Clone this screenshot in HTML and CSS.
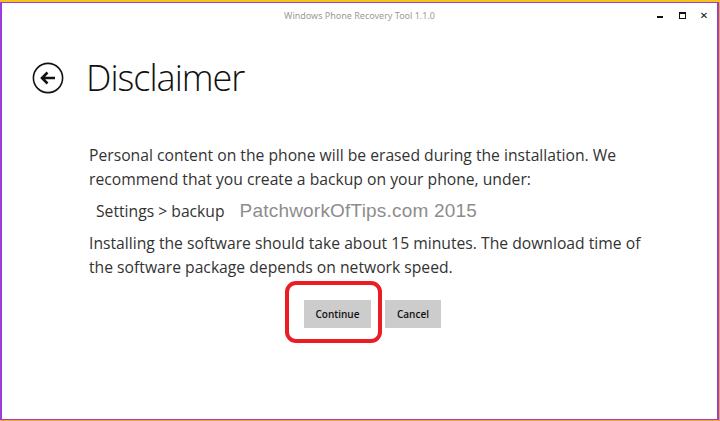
FILE: index.html
```html
<!DOCTYPE html>
<html lang="en">
<head>
  <meta charset="UTF-8">
  <title>Windows Phone Recovery Tool</title>
  <link rel="stylesheet" href="styles.css">
</head>
<body>
  <div class="taskstrip"></div>
  <div class="window">
    <div class="titlebar">
      <span class="title">Windows Phone Recovery Tool 1.1.0</span>
      <div class="winctrls">
        <span class="ctrl min"></span>
        <span class="ctrl max"></span>
        <span class="ctrl close">&#x2715;</span>
      </div>
    </div>

    <div class="header">
      <svg class="back" width="32" height="32" viewBox="0 0 32 32">
        <circle cx="16" cy="16" r="14.6" fill="none" stroke="#111" stroke-width="1.6"/>
        <path d="M23 16H10M15.5 10.5L10 16l5.5 5.5" fill="none" stroke="#111" stroke-width="2.6" stroke-linejoin="miter"/>
      </svg>
      <h1>Disclaimer</h1>
    </div>

    <div class="content">
      <p>Personal content on the phone will be erased during the installation. We recommend that you create a backup on your phone, under:</p>
      <div class="path">
        <span>Settings &gt; backup</span>
        <span class="watermark">PatchworkOfTips.com 2015</span>
      </div>
      <p>Installing the software should take about 15 minutes. The download time of the software package depends on network speed.</p>
    </div>

    <div class="actions">
      <button class="btn continue">Continue</button>
      <button class="btn cancel">Cancel</button>
    </div>
  </div>
</body>
</html>
```

FILE: styles.css
```css
html, body {
  margin: 0;
  padding: 0;
  height: 421px;
  overflow: hidden;
}
body {
  background: #f5a623;
  font-family: "Open Sans", "Noto Sans", sans-serif;
}
.taskstrip {
  height: 2px;
  background: #f7c21a;
}
.window {
  box-sizing: border-box;
  height: 418px;
  width: 719px;
  background: #fff;
  border: 1px solid #9a3ddb;
  border-left-width: 2px;
  border-right-width: 2px;
}
.titlebar {
  height: 24px;
  display: flex;
  align-items: center;
  justify-content: center;
  position: relative;
}
.title {
  font-family: "Noto Sans", sans-serif;
  font-size: 9px;
  color: #9a9a9a;
}
.winctrls {
  position: absolute;
  right: 0;
  top: 0;
  height: 24px;
  display: flex;
  align-items: center;
}
.ctrl {
  width: 22px;
  display: flex;
  justify-content: center;
  align-items: center;
  height: 12px;
}
.min::after {
  content: "";
  width: 6px;
  height: 2px;
  background: #111;
  margin-top: 4px;
}
.max::after {
  content: "";
  width: 5px;
  height: 4px;
  border: 1px solid #111;
  border-top-width: 2px;
}
.close {
  font-size: 10px;
  color: #111;
  margin-right: 2px;
  font-family: "DejaVu Sans", sans-serif;
}
.header {
  display: flex;
  align-items: center;
  padding: 34px 0 0 30px;
  height: 34px;
}
.back {
  margin-right: 22px;
}
h1 {
  margin: 0;
  font-weight: 300;
  font-size: 36px;
  color: #111;
  line-height: 34px;
  letter-spacing: -1px;
}
.content {
  padding: 48px 0 0 87px;
  width: 560px;
  color: #333;
  font-size: 15.7px;
  line-height: 24px;
}
.content p {
  margin: 0;
}
.path {
  display: flex;
  align-items: baseline;
  padding: 8px 0 8px 7px;
}
.watermark {
  font-family: "Liberation Sans", Arial, sans-serif;
  font-size: 19px;
  color: #8d8d8d;
  margin-left: 15px;
  letter-spacing: 0.2px;
}
.actions {
  display: flex;
  gap: 14px;
  padding: 21px 0 0 302px;
}
.btn {
  background: #cccccc;
  border: none;
  font-family: "Open Sans", "Noto Sans", sans-serif;
  font-weight: 600;
  font-size: 10px;
  color: #111;
  height: 28px;
  padding: 0;
  position: relative;
}
.continue {
  width: 67px;
}
.cancel {
  width: 56px;
}
.continue::after {
  content: "";
  position: absolute;
  left: -19px;
  top: -19px;
  width: 89px;
  height: 54px;
  border: 4px solid #ec1c24;
  border-radius: 11px;
}
```
